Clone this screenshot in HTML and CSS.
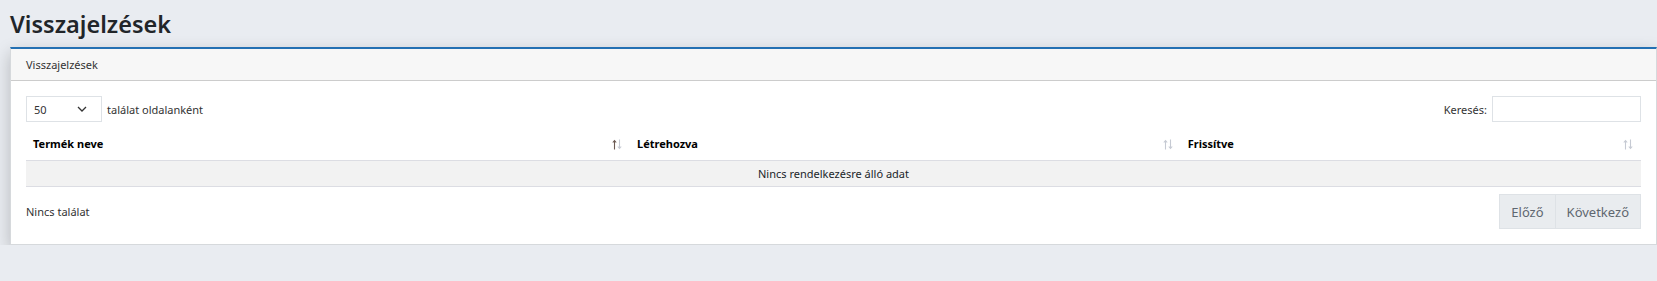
FILE: index.html
```html
<!DOCTYPE html>
<html lang="hu">
<head>
    <meta charset="UTF-8">
    <meta name="viewport" content="width=device-width, initial-scale=1.0">
    <title>Visszajelzések</title>
    <link rel="stylesheet" href="styles.css">
</head>
<body>
    <h1 class="page-title">Visszajelzések</h1>
    <div class="card">
        <div class="card-header">Visszajelzések</div>
        <div class="card-body">
            <div class="table-top">
                <label class="length">
                    <span class="select">
                        <span>50</span>
                        <svg width="10" height="6" viewBox="0 0 10 6"><path d="M1 1l4 4 4-4" fill="none" stroke="#333" stroke-width="1.3"/></svg>
                    </span>
                    találat oldalanként
                </label>
                <label class="search">
                    Keresés:
                    <input type="text">
                </label>
            </div>
            <table class="data-table">
                <thead>
                    <tr>
                        <th class="col-name">Termék neve
                            <svg class="sort active" width="10" height="11" viewBox="0 0 10 11"><path class="up" d="M2.5 10.5V1.5M0.8 3.5l1.7-2 1.7 2"/><path class="down" d="M7.5 0.5v9M5.8 7.5l1.7 2 1.7-2"/></svg>
                        </th>
                        <th class="col-created">Létrehozva
                            <svg class="sort" width="10" height="11" viewBox="0 0 10 11"><path class="up" d="M2.5 10.5V1.5M0.8 3.5l1.7-2 1.7 2"/><path class="down" d="M7.5 0.5v9M5.8 7.5l1.7 2 1.7-2"/></svg>
                        </th>
                        <th class="col-updated">Frissítve
                            <svg class="sort" width="10" height="11" viewBox="0 0 10 11"><path class="up" d="M2.5 10.5V1.5M0.8 3.5l1.7-2 1.7 2"/><path class="down" d="M7.5 0.5v9M5.8 7.5l1.7 2 1.7-2"/></svg>
                        </th>
                    </tr>
                </thead>
                <tbody>
                    <tr>
                        <td colspan="3" class="empty">Nincs rendelkezésre álló adat</td>
                    </tr>
                </tbody>
            </table>
            <div class="table-bottom">
                <div class="info">Nincs találat</div>
                <div class="pager">
                    <button disabled>Előző</button>
                    <button disabled>Következő</button>
                </div>
            </div>
        </div>
    </div>
</body>
</html>
```

FILE: styles.css
```css
body {
    margin: 0;
    padding: 0 0 0 10px;
    background: #e9ecf1;
    font-family: "Segoe UI", "Noto Sans", sans-serif;
    font-size: 11px;
    color: #212529;
}
.page-title {
    margin: 0;
    padding: 8px 0 6px;
    font-size: 23.5px;
    font-weight: 600;
    line-height: 33px;
    color: #212529;
}
.card {
    background: #fff;
    border: 1px solid #d6d9dc;
    border-top: 2px solid #2470b3;
    box-shadow: 0 6px 16px rgba(0, 0, 0, 0.22);
}
.card-header {
    background: #f7f7f7;
    border-bottom: 1px solid #cccccc;
    height: 31px;
    line-height: 31px;
    padding: 0 15px;
    color: #333;
}
.card-body {
    padding: 15px 15px 15px;
}
.table-top {
    display: flex;
    justify-content: space-between;
    align-items: center;
    height: 26px;
}
.length, .search {
    display: flex;
    align-items: center;
    gap: 5px;
    color: #333;
}
.select {
    box-sizing: border-box;
    width: 76px;
    height: 26px;
    border: 1px solid #dee2e6;
    display: flex;
    align-items: center;
    justify-content: space-between;
    padding: 0 14px 0 7px;
}
.search input {
    box-sizing: border-box;
    width: 149px;
    height: 26px;
    border: 1px solid #dee2e6;
    margin: 0;
}
.data-table {
    width: 100%;
    border-collapse: collapse;
    margin-top: 6px;
}
.data-table th {
    text-align: left;
    font-weight: 700;
    padding: 8px 7px;
    line-height: 16px;
    border-bottom: 1px solid #dcdde3;
    color: #000;
}
.col-name { width: 37.4%; }
.col-created { width: 34.1%; }
.sort {
    float: right;
    margin: 3px 1px 0 0;
    fill: none;
    stroke-width: 1.1;
}
.sort .up, .sort .down {
    stroke: #c6cad3;
}
.sort.active .up {
    stroke: #6b5a52;
}
.empty {
    background: #f2f2f2;
    text-align: center;
    padding: 5px;
    line-height: 15px;
    border-bottom: 1px solid #dcdde3;
}
.table-bottom {
    display: flex;
    justify-content: space-between;
    align-items: center;
    margin-top: 7px;
}
.info {
    color: #333;
}
.pager {
    display: flex;
}
.pager button {
    font-family: inherit;
    font-size: 13px;
    color: #5f6770;
    background: #e9ecef;
    border: 1px solid #dee2e6;
    height: 35px;
    padding: 0 11px;
    margin: 0;
}
.pager button + button {
    border-left: none;
}
```
